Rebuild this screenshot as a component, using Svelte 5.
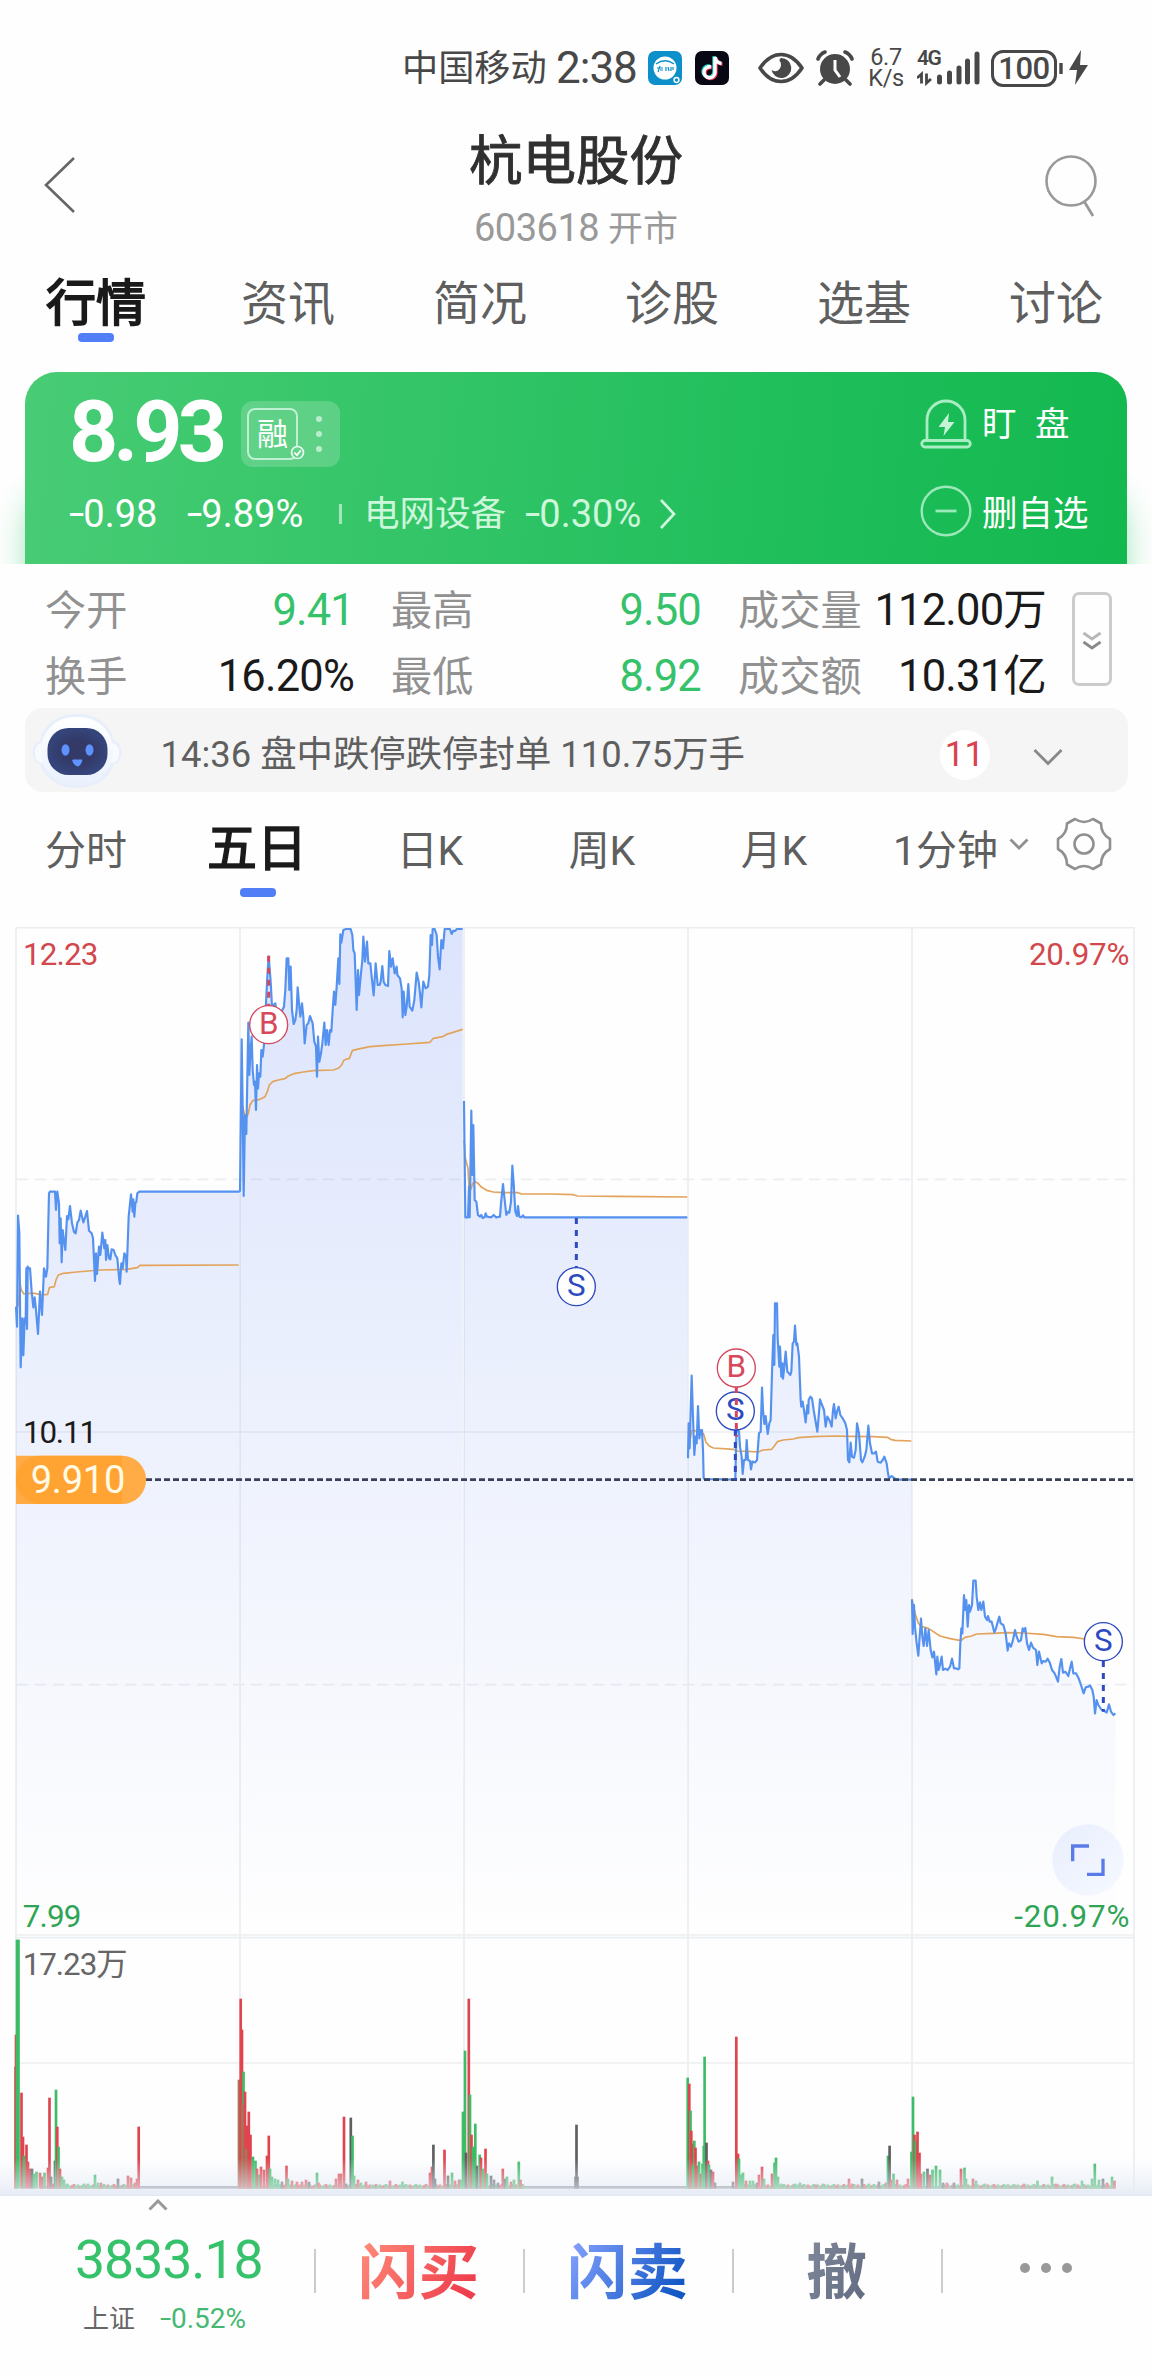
<script>
  const tabs = ['行情', '资讯', '简况', '诊股', '选基', '讨论'];
  const periods = ['分时', '五日', '日K', '周K', '月K'];
  const stats = [
    [{ label: '今开', value: '9.41', down: true }, { label: '换手', value: '16.20%' }],
    [{ label: '最高', value: '9.50', down: true }, { label: '最低', value: '8.92', down: true }],
    [{ label: '成交量', value: '112.00万' }, { label: '成交额', value: '10.31亿' }]
  ];

  // Plot units are a third of a CSS pixel. Each session: x/y origin, then the price and average traces.
  const sessions = [
    {
      dx: 0, dy: 0,
      price: '48,1190 51,1250 54,917 58,968 62,1372 67,1225 70,1336 74,1225 77,1240 79,1075 81,1257 83,1070 86,1075 90,1075 95,1145 100,1192 104,1162 107,1190 114,1272 120,1145 126,1215 132,1075 138,1100 142,1075 147,850 150,845 165,845 168,900 172,845 177,880 179,1000 182,925 185,1057 188,960 191,985 196,1020 201,918 205,928 210,888 216,940 222,966 227,970 232,938 237,930 242,902 250,937 256,920 261,903 267,962 275,970 279,985 285,1113 288,1030 291,1092 297,1010 301,1035 307,968 313,1015 316,990 318,1050 322,1005 327,1045 331,1048 335,1018 341,1020 346,1035 352,1045 358,1112 360,1122 364,1060 368,1075 373,1030 378,1040 380,1085 386,920 393,853 398,905 400,868 403,920 406,880 409,875 412,850 418,845 719,845',
      avg: '55,1190 60,1120 64,1140 72,1152 90,1150 105,1150 125,1155 143,1153 148,1133 163,1130 168,1110 175,1095 190,1090 230,1086 300,1080 380,1078 412,1073 420,1066 716,1065'
    },
    {
      dx: 0, dy: 0,
      price: '720,845 725,388 728,590 731,858 735,615 739,672 742,500 745,338 748,495 751,430 755,380 758,480 762,525 765,515 768,600 771,465 774,535 777,490 781,500 784,420 788,440 793,395 798,280 802,200 806,140 812,215 816,290 826,280 832,330 852,290 856,240 860,145 865,145 868,240 872,170 876,300 881,342 886,330 890,300 893,232 898,290 901,320 906,280 910,320 914,400 920,345 925,340 930,318 938,340 943,395 948,410 951,500 954,380 958,455 963,430 967,400 973,338 977,405 981,360 986,405 990,360 994,365 998,300 1002,245 1006,285 1010,230 1015,145 1018,222 1021,73 1024,98 1030,60 1038,57 1052,57 1057,75 1060,120 1064,130 1070,300 1074,180 1077,255 1082,200 1087,150 1090,80 1095,155 1101,95 1105,160 1111,160 1115,200 1121,256 1127,160 1133,225 1139,225 1142,215 1147,168 1151,215 1156,225 1164,228 1168,123 1173,170 1178,145 1184,190 1190,170 1192,195 1200,205 1205,235 1208,322 1211,245 1216,315 1220,290 1225,222 1229,290 1237,302 1243,270 1250,188 1256,215 1260,250 1264,292 1270,215 1277,235 1284,230 1288,195 1292,75 1296,105 1298,57 1304,57 1310,75 1314,140 1319,178 1324,90 1329,115 1334,57 1350,57 1355,72 1360,62 1366,63 1370,57 1388,57',
      avg: '728,590 735,618 741,620 745,610 750,585 758,572 780,568 795,560 802,545 808,525 818,515 835,510 855,506 865,498 885,490 910,486 940,482 1000,480 1015,475 1025,465 1032,450 1048,445 1057,422 1070,418 1110,410 1160,406 1220,402 1290,397 1300,385 1328,380 1340,373 1388,358'
    },
    {
      dx: 1350, dy: 0,
      price: '42,573 46,922 54,922 57,830 59,922 64,602 67,795 70,645 74,870 79,875 84,915 90,920 94,915 98,924 104,922 107,910 111,920 124,922 131,915 138,922 150,920 153,880 159,822 164,870 169,915 175,905 178,908 183,875 187,767 191,820 196,905 201,918 204,888 208,920 214,922 219,916 223,922 712,922',
      avg: '42,690 46,745 54,775 57,830 63,838 68,820 75,815 84,820 95,832 110,841 130,846 160,848 205,848 215,852 300,852 370,854 382,858 500,859 712,861'
    },
    {
      dx: 1980, dy: 1050,
      price: '84,595 86,490 89,565 92,450 95,347 99,470 103,585 107,530 110,550 114,438 118,535 122,510 126,510 129,570 131,655 134,657 226,659 229,520 232,510 237,515 240,560 245,590 248,642 252,600 257,600 260,540 264,600 270,603 273,628 277,605 285,607 291,600 294,560 297,520 302,515 306,383 309,450 313,492 317,468 323,522 328,490 332,480 336,340 340,225 343,315 345,130 351,130 353,235 358,320 360,260 364,350 367,310 369,356 373,320 377,275 382,335 387,340 391,345 394,335 398,250 402,245 405,197 409,255 412,250 417,290 422,420 424,440 428,425 432,450 437,487 442,435 445,460 446,420 451,410 456,415 461,450 466,480 472,515 476,470 480,418 486,435 492,450 497,500 502,470 508,480 515,500 519,450 522,432 527,475 531,455 536,440 541,465 548,475 556,490 561,510 564,600 568,607 572,548 576,590 582,593 587,570 591,490 597,520 603,600 607,607 614,590 619,570 625,497 630,550 636,580 642,580 648,575 653,605 662,608 668,600 673,590 680,610 684,640 687,655 695,648 700,652 708,659 755,659',
      avg: '84,560 92,530 96,512 104,512 126,516 132,525 137,545 147,557 160,564 220,568 232,573 262,574 295,576 308,570 335,568 343,558 352,545 370,540 400,537 415,533 460,530 520,528 570,529 640,530 682,532 692,538 705,541 754,543'
    },
    {
      dx: 1980, dy: 1050,
      price: '756,1018 758,1122 762,1035 765,1100 770,1150 775,1187 779,1130 783,1076 787,1130 791,1158 796,1105 801,1158 806,1110 812,1170 817,1192 822,1175 829,1243 832,1190 836,1230 840,1215 845,1190 849,1230 856,1226 863,1230 870,1220 876,1196 882,1225 888,1225 894,1228 898,1225 901,1150 904,1105 907,1120 912,1005 916,1050 919,1020 923,1100 927,1035 930,1055 936,1035 940,962 947,962 950,1010 955,1050 960,1027 964,1050 970,1025 975,1070 981,1080 984,1068 989,1085 995,1085 1003,1117 1008,1105 1012,1090 1018,1070 1022,1090 1030,1095 1037,1120 1043,1172 1047,1150 1053,1160 1059,1140 1065,1110 1070,1130 1076,1145 1083,1140 1088,1105 1092,1113 1096,1104 1101,1150 1107,1170 1113,1148 1119,1163 1128,1170 1132,1215 1137,1175 1145,1210 1150,1203 1157,1205 1163,1196 1170,1210 1176,1230 1184,1240 1194,1265 1199,1220 1204,1197 1209,1238 1216,1235 1225,1248 1230,1225 1235,1205 1240,1240 1248,1240 1256,1255 1263,1275 1271,1300 1277,1282 1285,1280 1290,1276 1297,1290 1301,1310 1305,1360 1310,1320 1315,1335 1325,1350 1332,1352 1340,1358 1347,1333 1353,1355 1360,1365 1366,1360',
      avg: '756,1018 765,1060 775,1090 785,1100 805,1105 820,1115 840,1128 870,1136 903,1142 915,1132 935,1128 950,1122 1000,1120 1040,1118 1090,1119 1150,1123 1190,1130 1240,1132 1275,1137 1290,1137'
    }
  ];

  const parse = (s, dx, dy) => s.split(' ').map((p) => {
    const [x, y] = p.split(',').map(Number);
    return [x + dx, y + dy];
  });
  const toPath = (pts) => 'M' + pts.map((p) => p.join(' ')).join('L');
  const FLOOR = 3075;
  const traces = sessions.map((s) => {
    const price = parse(s.price, s.dx, s.dy);
    const line = toPath(price);
    return {
      line,
      area: `${line}L${price[price.length - 1][0]} ${FLOOR}L${price[0][0]} ${FLOOR}Z`,
      avg: toPath(parse(s.avg, s.dx, s.dy))
    };
  });

  // Volume bars: colour key, x in px, height in px.
  const volumeSource =
    'n15.5,122 r16,154 g17,249 g18.5,249 r21.5,96 r23,52 g24,33 r26.5,44 r28,27 r30,20 k32,20 g34,15 g36.5,17 r40,16 r42,12 g44.5,16 r48,21 r49.5,91 k51,12 r53,5 k55,28 g56,99 r57.3,62 g58.5,42 r60,20 g62,12 g64,9 g67,5 g84,5 g88,5 g95,14 g98,6 r101,6 k118,10 r128,13 r131,11 r135,6 r137,10 r138.7,62 ' +
    'n239,109 r240.7,190 r242,159 g243.5,117 n242.5,84 r245,97 r247,63 r248.8,77 n246,40 r250.5,54 g253,32 g255.5,28 r257,20 g259,14 r261,22 r264,19 r267,33 r268.8,53 g270,20 g272,12 g275,10 g278,9 k282,7 r286.5,23 g288,10 r292,8 r297,7 r302,7 r306,9 k309,7 g317,16 r318.5,6 r336,10 r339,15 r341,15 r344,72 k346,5 k350.8,71 g352.5,53 g354,13 r358,9 g361,6 r366,7 g373,4 r390,8 g402.5,7 r430,16 r432,22 k433.4,44 k435,10 r444.5,39 k448,13 g452,16 r455,8 r459,9 g461,9 ' +
    'g463,77 g465,138 k466,36 r468.8,190 g470,94 r471.5,54 g473,42 g475.3,65 k477,23 g479.7,34 r481,31 g483,20 r485.5,40 g487,15 k491,13 k494,9 k498,6 r502.8,20 k505,10 g507,12 r511,7 g514,9 g518.8,27 r520.5,9 g523,4 k576.5,64 k577.5,12 k575.5,12 ' +
    'g687.7,111 r689.3,105 g690.5,78 r691.3,58 r693,45 g694.3,48 r695.5,41 g693,24 r697,23 g699,27 r701,15 g702.5,25 g703.8,43 g704.6,132 k706.5,46 r708,28 g709,24 k711,19 r713,17 k715,6 k733,7 r736.3,152 r738,35 g739,30 g741,14 g743,16 r746,8 g750,8 g753,8 k757,6 r759,14 r762,22 g764,10 r772,15 g774.5,26 g776,31 g778,12 g781,5 g795,5 g800,6 r816,4 g823,5 r849,10 r852,5 k862,10 g869,5 k879,7 r886,6 g888,33 k889.6,43 r891,9 g893.5,15 r897,9 r908,10 ' +
    'g911.5,37 g913,92 r914.5,54 g915.7,48 r917.5,57 r919.5,36 r921,15 g924,17 k927.5,20 r930,14 g932.5,19 g936,23 g940,19 k943,6 r947,6 k954,6 r961,20 g964.5,21 g966,10 r973,10 g976,8 g985,5 g1008,4 r1024,5 g1037.5,8 g1052,12 r1056,5 g1075,5 g1082,8 g1092,10 g1094.8,25 g1099,9 k1103,10 r1107,6 g1112,12 r1114.5,8';
  const fills = { r: '#e0454f', g: '#3dbb66', k: '#5d5f60', n: '#a3775a' };
  const BASE = 3836;
  const spikes = volumeSource.split(' ').map((b) => {
    const [x, h] = b.slice(1).split(',').map(Number);
    return { x: x * 3 - 4, h: h * 3, fill: fills[b[0]] };
  });
  // Low background turnover while the stock is not locked at its limit.
  const quiet = [];
  for (const [from, to] of [[60, 138], [272, 462], [488, 524], [740, 886], [892, 910], [940, 1115]]) {
    for (let x = from, i = 0; x < to; x += 2, i++) {
      quiet.push({ x: x * 3 - 4, h: 8 + ((i * 7) % 5) * 1.5, fill: (i * 5) % 7 < 3 ? fills.r : fills.g });
    }
  }
  const bars = [...quiet, ...spikes];

  const marks = [
    { t: 'B', x: 806, y: 344, from: 137, to: 287 },
    { t: 'S', x: 1729, y: 1130, from: 924, to: 1073 },
    { t: 'S', x: 2206, y: 1503, from: 1560, to: 1711 },
    { t: 'B', x: 2209, y: 1374, from: 1431, to: 1580 },
    { t: 'S', x: 3310, y: 2195, from: 2253, to: 2405 }
  ];
</script>

<div class="screen">
  <div class="status">
    <span class="carrier">中国移动</span>
    <span class="clock">2:38</span>
    <svg class="app" viewBox="0 0 34 34">
      <rect width="34" height="34" rx="7" fill="#0d90c9" />
      <circle cx="17" cy="17" r="11.5" fill="#fff" />
      <path d="M8 13q9-6.500 18 0" stroke="#0d90c9" stroke-width="1.300" fill="none" />
      <path d="M9 17h6m-3-2-2 6m2-2h3M18 16v4m2-4 1 4m2-4v4m2-4v3" stroke="#0d90c9" stroke-width="1.200" fill="none" />
      <circle cx="28.500" cy="29" r="2.400" fill="none" stroke="#fff" stroke-width="1.500" />
    </svg>
    <svg class="app second" viewBox="0 0 34 34">
      <rect width="34" height="34" rx="7" fill="#070813" />
      <g fill="none" stroke-width="3.400">
        <path d="M16 16a5.500 5.500 0 1 0 4 5.500V6c.5 4 3 6 6.500 6.500" stroke="#20d5ce" transform="translate(-1 -.8)" />
        <path d="M16 16a5.500 5.500 0 1 0 4 5.500V6c.5 4 3 6 6.500 6.500" stroke="#f0355a" transform="translate(1 .8)" />
        <path d="M16 16a5.500 5.500 0 1 0 4 5.500V6c.5 4 3 6 6.500 6.500" stroke="#fff" />
      </g>
    </svg>
    <svg class="eye" viewBox="0 0 46 32">
      <path d="M2 16Q11 2.500 23 2.500T44 16Q35 29.500 23 29.500T2 16Z" fill="none" stroke="#484848" stroke-width="3.600" stroke-linejoin="round" />
      <path d="M23 6a10 10 0 1 1-9.500 12q5 3 8-1t0-8.500q-.5-1.500 1.500-2.500Z" fill="#484848" />
    </svg>
    <svg class="alarm" viewBox="0 0 38 36">
      <circle cx="19" cy="19" r="15" fill="#484848" />
      <path d="M2 9q2-5 7-7M36 9q-2-5-7-7M8 30l-4 4M30 30l4 4" stroke="#484848" stroke-width="3.600" stroke-linecap="round" />
      <path d="M19 10v10l5 7" stroke="#fff" stroke-width="3" fill="none" />
    </svg>
    <span class="rate"><span>6.7</span><span>K/s</span></span>
    <span class="net"><b>4G</b>
      <svg viewBox="0 0 64 36">
        <path d="M0 28l4.500-4v9.500m5-10v9.500l4.500-4" fill="none" stroke="#484848" stroke-width="2.800" />
        <path d="M22.500 32v-5M32.500 32v-9M42 32V18M50.500 32V11M60 32V4" stroke="#484848" stroke-width="5" stroke-linecap="round" />
      </svg>
    </span>
    <span class="battery">100</span>
    <svg class="bolt" viewBox="0 0 30 36">
      <path d="M2 13v11" stroke="#484848" stroke-width="3.400" />
      <path d="M22 0 10 20h8l-2 15 13-20h-8z" fill="#484848" />
    </svg>
  </div>

  <header>
    <svg class="back" viewBox="0 0 32 58"><path d="M30 2 2 29l28 27" fill="none" stroke="#666" stroke-width="2.600" /></svg>
    <div class="name">
      <h1>杭电股份</h1>
      <p>603618 <span>开市</span></p>
    </div>
    <svg class="search" viewBox="0 0 54 64">
      <circle cx="27" cy="27" r="24.500" fill="none" stroke="#999" stroke-width="2.600" />
      <path d="M40.500 48l8.500 14" stroke="#999" stroke-width="2.800" />
    </svg>
  </header>

  <nav class="tabs">
    {#each tabs as tab, i}
      <div class="tab" class:on={i === 0}><span>{tab}</span></div>
    {/each}
  </nav>

  <section class="hero">
    <div class="card">
      <div class="quote">
        <div class="top">
          <strong>8.93</strong>
          <div class="tag">
            <span class="margin">融
              <svg viewBox="0 0 14 14"><circle cx="7" cy="7" r="5.600" fill="#65d28c" stroke="#e6fbee" stroke-width="1.600" /><path d="M4 7l2.500 2.500L10 5" fill="none" stroke="#fff" stroke-width="1.600" /></svg>
            </span>
            <span class="dots"><i></i><i></i><i></i></span>
          </div>
        </div>
        <div class="sub">
          <span class="chg"><i class="minus">-</i>0.98</span><span class="pct"><i class="minus">-</i>9.89%</span><i class="bar"></i>
          <span class="sector">电网设备</span><span class="spct"><i class="minus">-</i>0.30%</span>
          <svg viewBox="0 0 18 30"><path d="M2 1l13 14L2 29" fill="none" stroke="#d3f8e0" stroke-width="2.600" /></svg>
        </div>
      </div>
      <div class="actions">
        <div class="action">
          <svg viewBox="0 0 52 52">
            <path d="M7 42.500V22a19 19 0 0 1 38 0v20.500M5 42.500h42a3 3 0 0 1 0 6.500H5a3 3 0 0 1 0-6.500Z" fill="none" stroke="#a9edc3" stroke-width="2.800" />
            <path d="M29 15 18.500 29h6.500l-1.500 9L34.500 24H28z" fill="#c4f5d6" />
          </svg>
          <span class="watch">盯 盘</span>
        </div>
        <div class="action">
          <svg viewBox="0 0 52 52"><circle cx="26" cy="26" r="24.300" fill="none" stroke="#9be8b8" stroke-width="2.400" /><path d="M15.500 26h21" stroke="#9be8b8" stroke-width="2.800" /></svg>
          <span class="remove">删自选</span>
        </div>
      </div>
    </div>
  </section>

  <section class="stats">
    {#each stats as group}
      <dl>
        {#each group as s}
          <div><dt>{s.label}</dt><dd class:down={s.down}>{s.value}</dd></div>
        {/each}
      </dl>
    {/each}
    <div class="more">
      <svg viewBox="0 0 20 20"><path d="M1.500 2 10 8l8.500-6" fill="none" stroke="#b8b8b8" stroke-width="2.800" /><path d="M1.500 11 10 17l8.500-6" fill="none" stroke="#8a8a8a" stroke-width="2.800" /></svg>
    </div>
  </section>

  <section class="notice">
    <svg class="robot" viewBox="0 0 92 76">
      <defs>
        <linearGradient id="shell" x1="0" y1="0" x2="0" y2="1"><stop offset="0" stop-color="#fff" /><stop offset="1" stop-color="#eaf1fd" /></linearGradient>
        <radialGradient id="face"><stop offset=".5" stop-color="#333a68" /><stop offset="1" stop-color="#35457c" /></radialGradient>
      </defs>
      <path d="M46 1C66 1 80 12 83 28c10 2 10 20 0 23C77 67 64 75 46 75S15 67 9 51c-10-3-10-21 0-23C12 12 26 1 46 1Z" fill="#e8effb" />
      <rect x="4" y="30" width="84" height="20" rx="8" fill="#f7faff" />
      <rect x="10" y="4" width="72" height="68" rx="33" fill="url(#shell)" />
      <rect x="16.500" y="15" width="60" height="47" rx="21" fill="url(#face)" />
      <ellipse cx="34.500" cy="37" rx="4" ry="5.800" fill="#5d92ff" />
      <ellipse cx="58.500" cy="37" rx="4" ry="5.800" fill="#5d92ff" />
      <path d="M42 46.500h9q1 1-1.500 5t-6 0T42 46.500Z" fill="#5d92ff" />
    </svg>
    <p>14:36 盘中跌停跌停封单 110.75万手</p>
    <span class="count">11</span>
    <svg class="open" viewBox="0 0 30 18"><path d="M1.500 2 15 15.500 28.500 2" fill="none" stroke="#888" stroke-width="2.800" /></svg>
  </section>

  <nav class="periods">
    {#each periods as p, i}
      <div class="period" class:on={i === 1}><span>{p}</span></div>
    {/each}
    <div class="minute">
      <span>1分钟</span>
      <svg class="drop" viewBox="0 0 20 12"><path d="M1.500 1.500 10 10l8.500-8.500" fill="none" stroke="#909090" stroke-width="2.800" /></svg>
    </div>
    <svg class="gear" viewBox="-28 -27 56 54">
      <path d="M-9-25Q0-19 9-25L17-20.500Q17-10 26-5V5Q17 10 17 20.500L9 25Q0 19-9 25L-17 20.500Q-17 10-26 5V-5Q-17-10-17-20.500Z" fill="none" stroke="#909090" stroke-width="2.600" stroke-linejoin="round" />
      <circle r="9.500" fill="none" stroke="#909090" stroke-width="2.600" />
    </svg>
  </nav>

  <svg class="chart" viewBox="0 51 3456 3807">
    <defs>
      <linearGradient id="area" gradientUnits="userSpaceOnUse" x1="0" y1="51" x2="0" y2="3075">
        <stop offset="0" stop-color="#4370f5" stop-opacity=".18" />
        <stop offset=".5" stop-color="#4370f5" stop-opacity=".09" />
        <stop offset="1" stop-color="#4370f5" stop-opacity="0" />
      </linearGradient>
      <linearGradient id="haze" x1="0" y1="0" x2="0" y2="1">
        <stop offset="0" stop-color="#e4eaf4" stop-opacity="0" />
        <stop offset=".75" stop-color="#e4eaf4" stop-opacity=".6" />
        <stop offset="1" stop-color="#e4eaf4" stop-opacity="1" />
      </linearGradient>
      <linearGradient id="round" x1="0" y1="0" x2="1" y2="1"><stop offset="0" stop-color="#e8eefe" /><stop offset="1" stop-color="#f6f9ff" /></linearGradient>
    </defs>

    <g class="grid">
      <path d="M48 53H3405M48 1566H3405M48 3075H3405M48 3083H3405M48 3459H3405" />
      <path d="M48 53V3836M720 53V3836M1392 53V3836M2064 53V3836M2736 53V3836M3402 53V3836" />
      <path class="dash" d="M51 808H3402M51 2324H3402" />
    </g>

    {#each traces as t}<path d={t.area} fill="url(#area)" />{/each}
    {#each traces as t}<path class="avg" d={t.avg} />{/each}
    {#each traces as t}<path class="price" d={t.line} />{/each}

    <path class="ref" d="M411 1709H3402" />
    <path d="M48 1637H366a72.500 72.500 0 0 1 0 145H48Z" fill="#ffac47" />
    <path d="M120 1637H366V1782H120a72.500 72.500 0 0 1 0-145Z" fill="#ffa433" />
    <text x="92" y="1748" class="tagtext" textLength="284">9.910</text>

    {#each marks as m}
      <g class:buy={m.t === 'B'} class="mark">
        <circle cx={m.x} cy={m.y} r="57" />
        <path d="M{m.x} {m.from}V{m.to}" />
        <text x={m.x} y={m.y + 28}>{m.t}</text>
      </g>
    {/each}

    <g class="axis">
      <text x="69" y="165" fill="#d2474c" textLength="226">12.23</text>
      <text x="3388" y="165" fill="#d2474c" text-anchor="end" textLength="301">20.97%</text>
      <text x="69" y="1598" fill="#1b1b1b" textLength="222">10.11</text>
      <text x="68" y="3051" fill="#2fa455" textLength="176">7.99</text>
      <text x="3388" y="3051" fill="#2fa455" text-anchor="end" textLength="345">-20.97%</text>
      <text x="68" y="3195" fill="#666" textLength="315">17.23万</text>
    </g>

    <circle cx="3264" cy="2850" r="107" fill="url(#round)" />
    <path d="M3218 2854V2808H3267M3261 2893H3309V2846" fill="none" stroke="#5b7ce6" stroke-width="10" />

    <path d="M120 3832H3345" stroke="#8b8f94" stroke-width="8" />
    {#each bars as b}<rect x={b.x} y={BASE - b.h} width="8" height={b.h} fill={b.fill} />{/each}
    <rect x="0" y="3745" width="3456" height="113" fill="url(#haze)" />
  </svg>

  <footer>
    <div class="index">
      <svg class="up" viewBox="0 0 20 12"><path d="M1.500 10.500 10 2l8.500 8.500" fill="none" stroke="#999" stroke-width="3" /></svg>
      <span class="points">3833.18</span>
      <span class="market">上证 <em><i class="minus">-</i>0.52%</em></span>
    </div>
    <div class="cell buy">闪买</div>
    <div class="cell sell">闪卖</div>
    <div class="cell cancel">撤</div>
    <div class="cell menu"><i></i><i></i><i></i></div>
  </footer>
</div>

<style>
  :global(body) { margin: 0; background: #fefefe; }
  .screen {
    width: 1152px;
    height: 2376px;
    overflow: hidden;
    background: #fefefe;
    font-family: Roboto, 'Noto Sans CJK SC', sans-serif;
    color: #666;
    white-space: nowrap;
  }
  svg { display: block; flex: none; }
  h1, p, dl, dt, dd { margin: 0; font-weight: 400; }
  .minus { display: inline-block; margin-right: .1em; font-style: normal; transform: translateY(-.03em) scaleX(1.45); transform-origin: 0 50%; }

  .status { display: flex; align-items: center; height: 48px; padding: 44px 0 0 402px; color: #484848; line-height: 48px; }
  .carrier { width: 154px; padding-top: 1px; font-size: 36.200px; }
  .clock { width: 92px; font-size: 44px; letter-spacing: -1px; }
  .app { width: 34px; height: 34px; }
  .second { margin-left: 13px; }
  .eye { width: 46px; height: 32px; margin-left: 29px; }
  .alarm { width: 38px; height: 36px; margin-left: 12px; }
  .rate { display: flex; flex-direction: column; align-items: center; width: 36px; margin-left: 14px; font-size: 23.500px; line-height: 21px; letter-spacing: -.4px; }
  .net { position: relative; width: 64px; height: 36px; margin-left: 13px; }
  .net b { position: absolute; left: 0; top: -4px; font-size: 21px; line-height: 24px; font-weight: 600; letter-spacing: -1.500px; }
  .net svg { width: 64px; height: 36px; }
  .battery { box-sizing: border-box; width: 66px; height: 37px; margin-left: 10px; border: 3.500px solid #484848; border-radius: 12px; text-align: center; font-size: 31px; font-weight: 500; line-height: 31px; letter-spacing: -.5px; }
  .bolt { width: 30px; height: 36px; margin-left: 2px; }

  header { display: grid; grid-template-columns: 200px 752px 200px; height: 158px; }
  .back { width: 32px; height: 58px; margin: 64px 0 0 44px; }
  .search { justify-self: end; width: 54px; height: 64px; margin: 62px 54px 0 0; }
  .name { padding-top: 38px; text-align: center; }
  h1 { font-size: 53.500px; line-height: 64px; color: #303030; -webkit-text-stroke: .9px #303030; }
  .name p { margin-top: 14px; font-size: 38px; line-height: 40px; color: #999; letter-spacing: -.5px; }
  .name p span { font-size: 35px; letter-spacing: 0; }

  .tabs { display: grid; grid-template-columns: repeat(6, 192px); height: 98px; padding-top: 24px; }
  .tab { text-align: center; font-size: 47px; line-height: 60px; color: #5f5f5f; }
  .tab.on { font-size: 50px; color: #1a1a1a; -webkit-text-stroke: 1.800px #1a1a1a; }
  .tab.on::after { content: ''; display: block; width: 36px; height: 9px; margin: -1px auto 0; border-radius: 4px; background: #4f7ef7; }

  .hero { height: 192px; padding: 0 25px; overflow: hidden; }
  .card { display: flex; justify-content: space-between; box-sizing: border-box; height: 192px; padding: 22px 24px 0 44px; border-radius: 32px 32px 0 0; background: linear-gradient(95deg, #48cc75, #31c466 40%, #1fbe5b 70%, #13b84f); box-shadow: 0 118px 36px -8px rgba(40, 196, 100, .65); color: #fff; }
  .top { display: flex; align-items: center; height: 76px; }
  .top strong { width: 172px; font-size: 86px; line-height: 76px; font-weight: 700; letter-spacing: -5px; }
  .tag { display: flex; align-items: center; box-sizing: border-box; width: 99px; height: 66px; margin-top: 4px; padding-left: 6px; border-radius: 12px; background: rgba(255, 255, 255, .19); }
  .margin { position: relative; box-sizing: border-box; width: 51px; height: 52px; border: 2.500px solid #c0f0d2; border-radius: 8px; text-align: center; font-size: 31px; line-height: 50px; }
  .margin svg { position: absolute; right: -9px; bottom: -2px; width: 15px; height: 15px; }
  .dots { display: flex; flex-direction: column; gap: 9px; margin-left: 18px; }
  .dots i { width: 6px; height: 6px; border-radius: 50%; background: #b9edcb; }
  .sub { display: flex; align-items: center; height: 48px; margin-top: 20px; font-size: 38px; line-height: 48px; }
  .chg { width: 118px; }
  .pct { width: 152px; }
  .bar { width: 3px; height: 20px; margin-right: 22px; background: rgba(255, 255, 255, .55); }
  .sector { width: 161px; font-size: 35.500px; color: #cdf7db; }
  .spct { width: 134px; color: #cdf7db; }
  .sub svg { width: 18px; height: 30px; }
  .actions { padding: 2px 12px 0 0; }
  .action { display: flex; align-items: center; gap: 10px; width: 171px; height: 56px; font-size: 35px; line-height: 56px; }
  .action + .action { margin-top: 31px; }
  .action svg { width: 52px; height: 52px; }
  .watch { font-size: 34.500px; word-spacing: 10px; }
  .remove { padding-top: 6px; font-size: 35.500px; }

  .stats { display: grid; grid-template-columns: 309px 310px 308px 40px; column-gap: 37px; height: 130px; padding: 14px 0 0 45px; }
  .stats dl div { display: flex; justify-content: space-between; height: 66px; line-height: 66px; }
  dt { font-size: 41.200px; color: #919191; }
  dd { font-size: 43.500px; color: #1a1a1a; letter-spacing: -.8px; }
  dd.down { color: #35c26b; }
  .more { display: flex; align-items: center; justify-content: center; box-sizing: border-box; height: 94px; margin: 14px 0 0 -11px; width: 40px; padding-top: 4px; border: 3px solid #ccc; border-radius: 7px; }
  .more svg { width: 20px; height: 20px; }

  .notice { display: flex; align-items: center; height: 84px; margin: 0 24px 0 24.500px; border-radius: 18px; background: #f5f5f5; }
  .robot { width: 92px; height: 76px; margin: 2px 0 0 6px; }
  .notice p { width: 779px; margin-left: 38px; padding-top: 9px; font-size: 36.400px; line-height: 75px; color: #5f5f5f; }
  .count { width: 50px; height: 50px; margin-top: 9px; border-radius: 50%; background: #fff; color: #d9424f; font-size: 35px; line-height: 50px; text-align: center; }
  .open { width: 30px; height: 18px; margin: 14px 0 0 43px; }

  .periods { display: flex; height: 104px; padding-top: 31px; }
  .period { width: 172px; text-align: center; font-size: 41px; line-height: 56px; color: #5f5f5f; }
  .period.on { font-size: 50px; color: #1a1a1a; -webkit-text-stroke: 1.500px #1a1a1a; }
  .period.on span { position: relative; left: -1px; top: -2px; }
  .period.on::after { content: ''; display: block; width: 36px; height: 9px; margin: 9px auto 0; border-radius: 4px; background: #4f7ef7; }
  .minute { display: flex; width: 163px; padding-left: 33px; font-size: 41px; line-height: 56px; color: #5f5f5f; }
  .drop { width: 20px; height: 12px; margin: 15px 0 0 11px; }
  .gear { width: 56px; height: 54px; margin-top: -6px; }

  .chart { width: 1152px; height: 1269px; }
  .grid path { fill: none; stroke: #ebeef1; stroke-width: 5; }
  .grid .dash { stroke-dasharray: 34 20; }
  .price, .avg { fill: none; stroke-linejoin: round; }
  .price { stroke: #5592f0; stroke-width: 6.500; }
  .avg { stroke: #e3a35a; stroke-width: 5; }
  .ref { stroke: #3a4057; stroke-width: 8; stroke-dasharray: 18 9; }
  .tagtext { font-size: 114px; fill: #fffbe6; }
  .mark circle { fill: #fff; stroke: #2d4ac0; stroke-width: 4; }
  .mark path { stroke: #2d4ac0; stroke-width: 9; stroke-dasharray: 18 18; }
  .mark text { font-size: 94px; fill: #2d4ac0; text-anchor: middle; }
  .mark.buy circle, .mark.buy path { stroke: #d5475a; }
  .mark.buy text { fill: #d9485a; }
  .axis { font-size: 94px; }

  footer { display: flex; height: 180px; }
  .index { display: flex; flex-direction: column; width: 314px; color: #35c26b; }
  .up { width: 20px; height: 12px; margin: 3px 0 0 148px; }
  .points { margin: 21px 0 0 75px; font-size: 53.500px; line-height: 56px; letter-spacing: -1px; }
  .market { margin: 11px 0 0 83px; font-size: 26px; line-height: 40px; color: #666; }
  .market em { margin-left: 19px; font-style: normal; font-size: 28px; color: #45b871; }
  .cell { position: relative; width: 209px; height: 90px; padding-top: 33px; text-align: center; font-size: 60.500px; line-height: 90px; font-weight: 700; }
  .cell::before { content: ''; position: absolute; left: 0; top: 53px; width: 2px; height: 44px; background: #ccc; }
  .cell.buy, .cell.sell, .cell.cancel { -webkit-text-fill-color: transparent; -webkit-background-clip: text; background-clip: text; }
  .buy { background-image: linear-gradient(120deg, #ff8d7a 25%, #ee3d4c 75%); }
  .sell { background-image: linear-gradient(120deg, #86a3ff 25%, #1257c4 75%); }
  .cancel { background-image: linear-gradient(120deg, #8a92a2 25%, #5c667c 75%); }
  .menu { display: flex; justify-content: center; gap: 11px; box-sizing: border-box; height: 90px; padding-top: 67px; }
  .menu i { width: 10px; height: 10px; border-radius: 50%; background: #999; }
</style>
